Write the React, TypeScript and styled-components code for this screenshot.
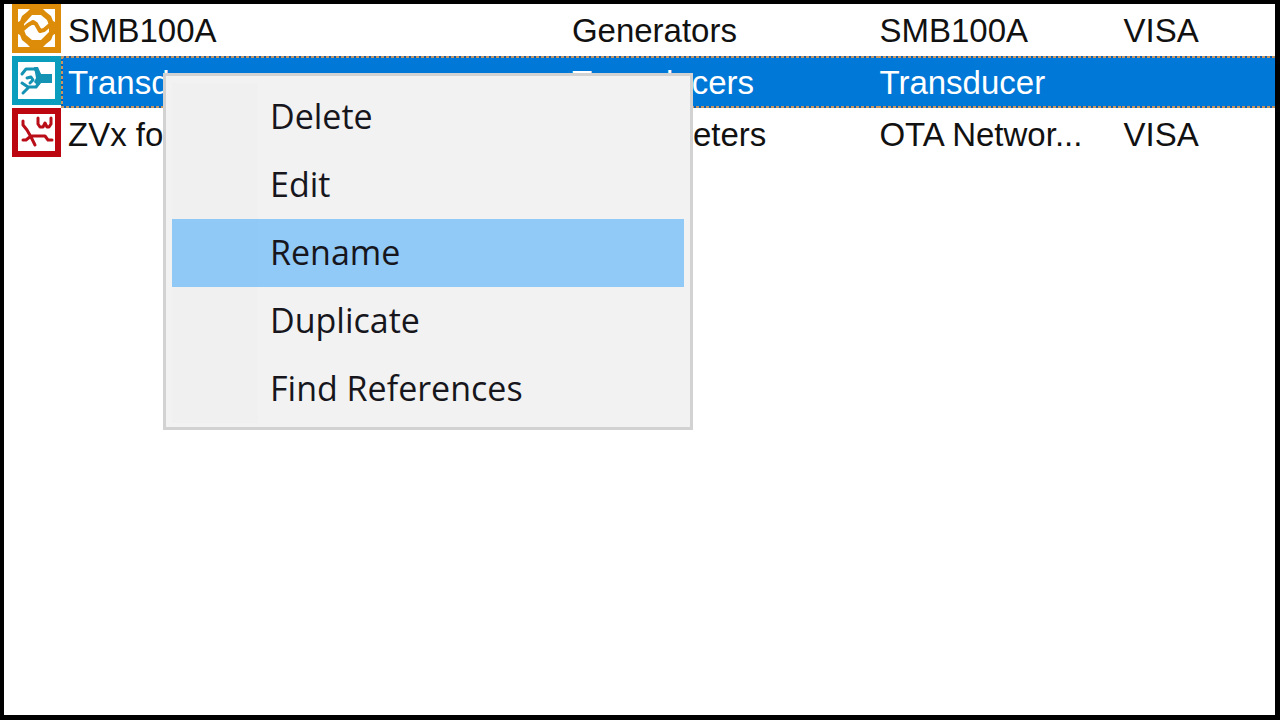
import React from "react";
import styled, { createGlobalStyle, css } from "styled-components";

const GlobalStyle = createGlobalStyle`
  *, *::before, *::after { box-sizing: border-box; }
  body { margin: 0; background: #fff; }
`;

const Frame = styled.main`
  position: relative;
  min-height: 100vh;
  border: 4px solid #000;
  border-right-width: 5px;
  border-bottom-width: 5px;
  background: #fff;
  overflow: hidden;
`;

const DeviceTable = styled.table`
  width: 100%;
  table-layout: fixed;
  border-collapse: collapse;
  font: 33px/50px "Liberation Sans", Arial, sans-serif;
  color: #111;
`;

const Column = styled.col<{ $width?: string }>`
  width: ${(p) => p.$width ?? "auto"};
`;

const IconCell = styled.td`
  height: 52px;
  padding: 0 0 0 8px;
  vertical-align: top;
  line-height: 0;
`;

const focusDots = "repeating-linear-gradient(90deg, #c9965f 0 3px, #0b62b4 3px 5px)";
const focusDotsVertical = "repeating-linear-gradient(180deg, #c9965f 0 3px, #0b62b4 3px 5px)";

const Cell = styled.td<{ $selected?: boolean; $first?: boolean }>`
  height: 52px;
  padding: 2px 0 0 ${(p) => (p.$first ? 7 : 1)}px;
  white-space: nowrap;
  overflow: hidden;
  ${(p) =>
    p.$selected &&
    css`
      color: #fff;
      background:
        ${focusDots} top / 100% 2px no-repeat,
        ${focusDots} bottom / 100% 2px no-repeat,
        ${p.$first ? `${focusDotsVertical} left / 2px 100% no-repeat,` : ""}
        #0078d7;
    `}
`;

const Icon = styled.svg`
  display: block;
  width: 49px;
  height: 49px;
`;

const Menu = styled.menu`
  position: absolute;
  left: 159px;
  top: 69px;
  width: 530px;
  margin: 0;
  padding: 7px 6px 4px;
  border: 3px solid #d2d2d2;
  background: #f2f2f2;
  list-style: none;
`;

const MenuItem = styled.button<{ $active?: boolean }>`
  display: block;
  width: 100%;
  height: 68px;
  padding: 0 0 2px 98px;
  border: 0;
  background: ${(p) =>
    p.$active
      ? "linear-gradient(90deg, #90c8f6 86px, #91c9f7 86px)"
      : "linear-gradient(90deg, #f0f0f0 86px, #f2f2f2 86px)"};
  color: #16161c;
  font: 500 34px/66px "Open Sans", "Noto Sans", sans-serif;
  text-align: left;
`;

function GeneratorIcon() {
  return (
    <Icon viewBox="0 0 49 49" aria-hidden="true">
      <rect width="49" height="49" fill="#dc8c08" />
      <path
        fill="#fff"
        d="M6 5H18L15 8L10 12L8 17L6 18ZM43 5H31L34 8L39 12L41 17L43 18ZM6 43H18L15 40L10 36L8 31L6 30ZM43 43H31L34 40L39 36L41 31L43 30Z"
      />
      <path fill="#fff" d="M20 11H29L35 16L37 21V28L29 36H20L14 31L12 26V20Z" />
      <path d="M10 26L16 21L21 18L24 20L28 27L32 26L39 20" fill="none" stroke="#dc8c08" strokeWidth="4" strokeLinejoin="round" />
    </Icon>
  );
}

function TransducerIcon() {
  return (
    <Icon viewBox="0 0 49 49" aria-hidden="true">
      <rect width="49" height="49" fill="#0b9dbd" />
      <rect x="6" y="6" width="37" height="37" fill="#fff" />
      <g fill="none" stroke="#1593b4" strokeWidth="3" strokeLinecap="round" strokeLinejoin="round">
        <path d="M10 18L14 13H23L27 18M27 27L24 31H17L11 37" />
        <path d="M15 22L19 21L21 24L18 27M10 27L16 31" />
      </g>
      <path d="M22 11H26L29 18H40V27H29L26 30L22 26L24 22Z" fill="#1593b4" />
    </Icon>
  );
}

function AnalyzerIcon() {
  return (
    <Icon viewBox="0 0 49 49" aria-hidden="true">
      <rect width="49" height="49" fill="#bd0710" />
      <rect x="6" y="6" width="37" height="37" fill="#fff" />
      <g fill="none" stroke="#b90d17" strokeWidth="3" strokeLinecap="round" strokeLinejoin="round">
        <path d="M11 13V17L15 22L19 29L23 37M11 32H14L19 28H33L36 32H40" />
        <path d="M26 10V16L28 19H31L33 15L35 19H37L39 16V10" />
      </g>
    </Icon>
  );
}

const devices = [
  { icon: GeneratorIcon, name: "SMB100A", group: "Generators", type: "SMB100A", port: "VISA" },
  { icon: TransducerIcon, name: "Transducer", group: "Transducers", type: "Transducer", port: "", selected: true },
  { icon: AnalyzerIcon, name: "ZVx for OTA", group: "Powermeters", type: "OTA Networ...", port: "VISA" },
];

const actions = ["Delete", "Edit", "Rename", "Duplicate", "Find References"];

export default function App() {
  return (
    <Frame>
      <GlobalStyle />
      <DeviceTable aria-label="Devices">
        <colgroup>
          <Column $width="57px" />
          <Column />
          <Column $width="24.2%" />
          <Column $width="19.2%" />
          <Column $width="12%" />
        </colgroup>
        <tbody>
          {devices.map(({ icon: DeviceIcon, ...d }) => (
            <tr key={d.name} aria-selected={d.selected}>
              <IconCell>
                <DeviceIcon />
              </IconCell>
              <Cell $first $selected={d.selected}>{d.name}</Cell>
              <Cell $selected={d.selected}>{d.group}</Cell>
              <Cell $selected={d.selected}>{d.type}</Cell>
              <Cell $selected={d.selected}>{d.port}</Cell>
            </tr>
          ))}
        </tbody>
      </DeviceTable>
      <Menu aria-label="Device actions">
        {actions.map((label) => (
          <li key={label}>
            <MenuItem type="button" $active={label === "Rename"}>{label}</MenuItem>
          </li>
        ))}
      </Menu>
    </Frame>
  );
}
